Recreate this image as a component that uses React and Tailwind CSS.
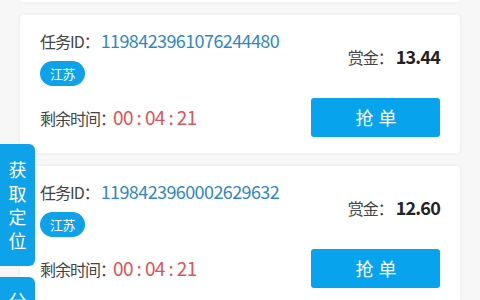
import React from "react";

const font = { fontFamily: '"Noto Sans CJK SC", "Noto Sans", sans-serif' };

function Card({ id, reward }) {
  return (
    <div className="flex h-[138px] rounded bg-white px-5 shadow-[0_0_4px_rgba(0,0,0,0.06)]">
      <div className="flex flex-1 flex-col">
        <div className="mt-[12px] flex items-baseline leading-[26px]">
          <span className="text-[16px] tracking-[-1px] text-[#444]">任务ID：</span>
          <span className="ml-[2px] text-[18px] tracking-[-0.6px] text-[#3187c6]">{id}</span>
        </div>
        <div className="mt-[7px] flex">
          <span className="flex h-[25px] w-[45px] items-center justify-center rounded-full bg-[#0ea2e8] text-[13px] tracking-[-0.5px] text-white">
            江苏
          </span>
        </div>
        <div className="mt-[18px] flex items-baseline leading-[26px] text-[#444]">
          <span className="text-[16px] tracking-[-1px]">剩余时间：</span>
          <span className="ml-[-2px] text-[19px] tracking-[-0.6px] text-[#df535c]">00 : 04 : 21</span>
        </div>
      </div>
      <div className="flex w-[130px] flex-col items-end">
        <div className="mt-[29px] flex items-baseline leading-[24px]">
          <span className="text-[16px] tracking-[-1px] text-[#444]">赏金：</span>
          <span className="ml-[3px] text-[18px] font-bold tracking-[-0.8px] text-[#222]">{reward}</span>
        </div>
        <button className="mt-[29px] flex h-[39px] w-[129px] items-center justify-center rounded-[3px] bg-[#07a3ec] pl-[6px] text-[18px] tracking-[5px] text-white">
          抢单
        </button>
      </div>
    </div>
  );
}

export default function App() {
  return (
    <div className="relative h-[300px] w-[480px] overflow-hidden bg-[#f7f7f7]" style={font}>
      <div className="flex flex-col gap-[13px] px-5">
        <div className="h-[2px] rounded-b bg-white shadow-[0_0_4px_rgba(0,0,0,0.06)]" />
        <Card id="1198423961076244480" reward="13.44" />
        <Card id="1198423960002629632" reward="12.60" />
      </div>
      <div className="absolute left-0 top-[144px] flex h-[122px] w-[35px] flex-col items-center justify-center rounded-r-[6px] bg-[#0ea2e8] text-[18px] leading-[23.5px] text-white">
        <span>获</span>
        <span>取</span>
        <span>定</span>
        <span>位</span>
      </div>
      <div className="absolute left-0 top-[277px] flex h-[122px] w-[35px] flex-col items-center rounded-r-[6px] bg-[#0ea2e8] pt-[12px] text-[18px] leading-[23.5px] text-white">
        <span>分</span>
      </div>
    </div>
  );
}
